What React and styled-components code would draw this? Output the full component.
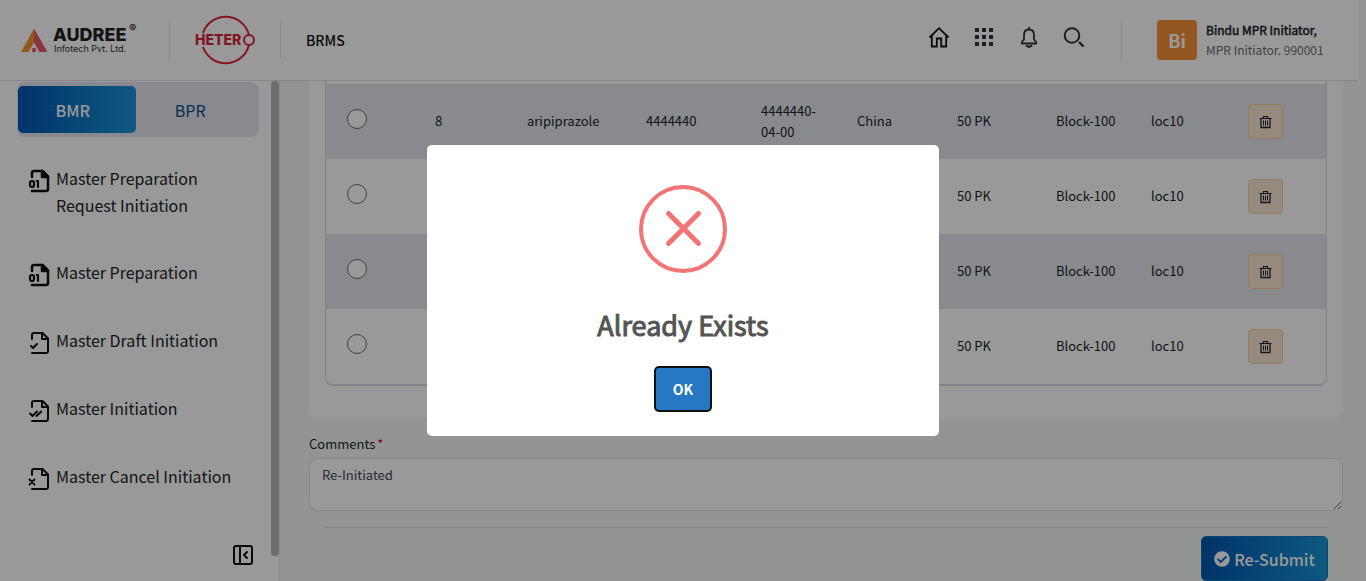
import React from "react";
import styled, { createGlobalStyle } from "styled-components";
import { PanelLeftClose } from "lucide-react";
import { FaCheckCircle } from "react-icons/fa";

const GlobalStyle = createGlobalStyle`
  * { box-sizing: border-box; }
  body {
    margin: 0;
    background: #f5f9f7;
    color: #212529;
    font-family: "Noto Sans CJK SC", "Noto Sans", sans-serif;
    font-size: 13px;
  }
  button, textarea { font-family: inherit; }
`;

const Page = styled.div`
  display: flex;
  flex-direction: column;
  min-height: 100vh;
`;

const Header = styled.header`
  display: flex;
  align-items: center;
  height: 81px;
  margin-right: 8px;
  padding: 0 37px 0 20px;
  background: #fff;
  border-bottom: 1px solid #dfe0ea;
`;

const Divider = styled.span`
  width: 1px;
  height: 35px;
  background: #dcdfe3;
  margin: 0 ${(p) => p.$right}px 0 ${(p) => p.$left}px;
`;

const AppName = styled.span`
  font-size: 14px;
  font-weight: 500;
  color: #111;
`;

const Tools = styled.nav`
  display: flex;
  gap: 21px;
  margin-left: auto;
  padding-bottom: 6px;
`;

const ToolButton = styled.button`
  width: 24px;
  height: 24px;
  padding: 0;
  border: 0;
  background: none;
  color: #2c3440;
  svg { display: block; }
`;

const Avatar = styled.div`
  width: 40px;
  height: 40px;
  border-radius: 4px;
  background: #f59138;
  color: #fff;
  font-size: 18px;
  font-weight: 700;
  line-height: 41px;
  text-align: center;
`;

const UserInfo = styled.div`
  width: 115px;
  margin-left: 9px;
  font-size: 12px;
  line-height: 20px;
  white-space: nowrap;
`;

const UserName = styled.div`
  color: #212529;
  -webkit-text-stroke: 0.5px #212529;
`;

const UserRole = styled.div`
  color: #6c6c6c;
`;

const Body = styled.div`
  display: flex;
  flex: 1;
`;

const Sidebar = styled.aside`
  display: flex;
  flex: 0 0 280px;
  background: #fff;
  border-right: 1px solid #e4e8ea;
`;

const SidebarContent = styled.div`
  display: flex;
  flex-direction: column;
  flex: 1;
  padding: 1px 12px 14px 17px;
`;

const ScrollThumb = styled.div`
  width: 8px;
  height: 95%;
  border-radius: 4px;
  background: #b4b7b6;
`;

const Tabs = styled.div`
  display: flex;
  padding: 4px 6px 4px 1px;
  border-radius: 8px;
  background: #e4e6ee;
`;

const Tab = styled.button`
  flex: 1;
  height: 47px;
  padding: 0 8px 0 0;
  border: 0;
  border-radius: 5px;
  font-size: 16px;
  font-weight: ${(p) => (p.$active ? 500 : 400)};
  color: ${(p) => (p.$active ? "#fff" : "#0a4d8c")};
  background: ${(p) => (p.$active ? "linear-gradient(90deg, #0057b0, #1994d8)" : "none")};
`;

const Menu = styled.nav`
  display: flex;
  flex-direction: column;
  gap: 40px;
  margin: 28px 0 0 11px;
`;

const MenuLink = styled.a`
  display: flex;
  gap: 4px;
  font-size: 16px;
  line-height: 27px;
  color: #212529;
  text-decoration: none;
  svg { flex: none; margin-top: 4px; color: #111; }
`;

const CollapseButton = styled.button`
  align-self: flex-end;
  width: 24px;
  height: 24px;
  margin-top: auto;
  margin-right: 4px;
  padding: 0;
  border: 0;
  background: none;
  color: #111;
  svg { display: block; }
`;

const Main = styled.main`
  flex: 1;
  min-width: 0;
  padding: 0 23px 0 29px;
`;

const Card = styled.section`
  padding: 0 16px 32px;
  border-radius: 0 0 8px 8px;
  background: #fff;
`;

const TableFrame = styled.div`
  padding-top: 3px;
  border: 1px solid #d9dbe6;
  border-top: 0;
  border-bottom-width: 2px;
  border-radius: 0 0 8px 8px;
  overflow: hidden;
`;

const Table = styled.table`
  width: 100%;
  table-layout: fixed;
  border-collapse: collapse;
`;

const Row = styled.tr`
  height: 75px;
  background: ${(p) => (p.$shaded ? "#e4e6ed" : "#fff")};
`;

const Cell = styled.td`
  padding: 0 8px 2px 20px;
  line-height: 21px;
  vertical-align: middle;
`;

const ActionCell = styled(Cell)`
  padding-bottom: 0;
`;

const Radio = styled.input`
  appearance: none;
  display: block;
  width: 20px;
  height: 20px;
  margin: 0 0 4px 1px;
  border: 1px solid #6b6b6b;
  border-radius: 50%;
  background: #fff;
`;

const DeleteButton = styled.button`
  display: grid;
  place-items: center;
  width: 35px;
  height: 35px;
  padding: 0;
  border: 1px solid #fbcf9f;
  border-radius: 4px;
  background: #fbe4d0;
  color: #212529;
`;

const Field = styled.div`
  margin-top: 16px;
`;

const Label = styled.label`
  display: block;
  line-height: 20px;
`;

const Required = styled.span`
  margin-left: 2px;
  color: #e3001b;
`;

const Comments = styled.textarea`
  display: block;
  width: 100%;
  height: 53px;
  margin-top: 4px;
  padding: 6px 12px;
  border: 1px solid #dfe1ec;
  border-radius: 8px;
  background: #fff;
  color: #454b54;
  font-size: 13px;
  line-height: 20px;
`;

const Actions = styled.div`
  display: flex;
  justify-content: flex-end;
  margin: 16px 15px 0;
  padding-top: 8px;
  border-top: 1px solid #d9dbe0;
`;

const SubmitButton = styled.button`
  display: flex;
  align-items: center;
  justify-content: center;
  gap: 4px;
  width: 127px;
  height: 45px;
  padding: 0;
  border: 1px solid #1676bd;
  border-radius: 5px;
  background: linear-gradient(90deg, #0057b0, #1994d8);
  color: #fff;
  font-size: 16px;
  font-weight: 500;
`;

const Overlay = styled.div`
  position: fixed;
  inset: 0;
  display: flex;
  align-items: center;
  justify-content: center;
  background: rgba(0, 0, 0, 0.4);
`;

const Dialog = styled.div`
  display: flex;
  flex-direction: column;
  align-items: center;
  width: 512px;
  max-width: 100%;
  padding: 40px 20px 24px;
  border-radius: 5px;
  background: #fff;
`;

const DialogTitle = styled.h2`
  margin: 31px 0 21px;
  font-size: 27px;
  font-weight: 400;
  line-height: 41px;
  color: #545454;
  -webkit-text-stroke: 1px #545454;
`;

const OkButton = styled.button`
  width: 58px;
  height: 46px;
  padding: 0;
  border: 2px solid #101010;
  border-radius: 5px;
  background: #2778c4;
  color: #fff;
  font-size: 14px;
  font-weight: 700;
`;

function AudreeLogo() {
  return (
    <svg width="120" height="40" viewBox="0 0 120 40" role="img" aria-label="Audree Infotech">
      <path d="M14 8.500 1 32h7.500L14 22.500z" fill="#f4932f" />
      <path d="M14 8.500v14l5.500 9.500H27.500z" fill="#e4576b" />
      <circle cx="14" cy="30" r="2.200" fill="#e4576b" />
      <text x="33" y="21" fontFamily="Inter, sans-serif" fontSize="18" fontWeight="800" fill="#222">AUDREE</text>
      <text x="34" y="32" fontFamily="Inter, sans-serif" fontSize="9" fill="#333">Infotech Pvt. Ltd.</text>
      <text x="109" y="12" fontFamily="Inter, sans-serif" fontSize="11" fontWeight="600" fill="#222">®</text>
    </svg>
  );
}

function HeteroLogo() {
  return (
    <svg width="60" height="50" viewBox="0 0 60 50" role="img" aria-label="Hetero">
      <g fill="none" stroke="#d7263a" strokeWidth="2">
        <path d="M8 18a24 24 0 0 1 46 2M8 32a24 24 0 0 0 46-2" />
        <circle cx="54" cy="25" r="5" />
      </g>
      <text x="0" y="30" fontFamily="Inter, sans-serif" fontSize="14" fontWeight="800" fill="#d7263a">HETER</text>
    </svg>
  );
}

function HomeIcon() {
  return (
    <svg width="24" height="24" viewBox="0 0 24 24" fill="none" stroke="#111" strokeWidth="1.800">
      <path d="M2.500 12.500 12 3.200l9.500 9.300M4.800 11v10.500h5v-8h4.400v8h5V11" />
    </svg>
  );
}

function GridIcon() {
  return (
    <svg width="24" height="24" viewBox="0 0 24 24" fill="currentColor">
      {[3, 10, 17].map((y) => [3, 10, 17].map((x) => <rect key={`${x}-${y}`} x={x} y={y} width="4" height="4" />))}
    </svg>
  );
}

function BellIcon() {
  return (
    <svg width="24" height="24" viewBox="0 0 24 24" fill="none" stroke="currentColor" strokeWidth="1.800" strokeLinejoin="round">
      <path d="M12 2v2.500M4.800 18.500h14.400v-1.500L17 14.500V10c0-3.500-2-5.500-5-5.500S7 6.500 7 10v4.500L4.800 17z" />
      <path d="M9 20.300q3 3 6 0" strokeWidth="2.200" />
    </svg>
  );
}

function SearchIcon() {
  return (
    <svg width="24" height="24" viewBox="0 0 24 24" fill="none" stroke="currentColor" strokeWidth="2">
      <circle cx="10" cy="10.500" r="7.300" />
      <path d="m17 17 4.500 4.500" strokeWidth="2.400" />
    </svg>
  );
}

function TrashIcon() {
  return (
    <svg width="13" height="14" viewBox="0 0 13 14" fill="none" stroke="currentColor">
      <path d="M0.500 3.500h12M4.500 3.500V1.500h4v2" strokeWidth="1.200" />
      <path d="M2 3.500v9h9v-9" strokeWidth="1.300" />
      <path d="M4.500 5.500v5M6.500 5.500v5M8.500 5.500v5" />
    </svg>
  );
}

const fileMarks = {
  check: <path d="m3 15 2 2 4-4" />,
  double: <path d="m2 14.500 2.500 2.500 4.500-4.500M8.500 17l4.700-4.500" />,
  cross: <path d="m1.500 12.500 5 5m0-5-5 5" />,
};

function FileIcon({ mark }) {
  if (mark === "digits") {
    return (
      <svg width="24" height="24" viewBox="0 0 24 24" fill="none" stroke="currentColor" strokeWidth="2.500" strokeLinecap="round" strokeLinejoin="round">
        <path d="M4 22h14a2 2 0 0 0 2-2V7.500L14.500 2H6a2 2 0 0 0-2 2v4" />
        <path d="M14 2v6h6z" fill="currentColor" />
        <rect x="2" y="12" width="4" height="6" rx="2" strokeWidth="2.200" />
        <path d="M8.800 12H10v6" strokeWidth="2.200" />
      </svg>
    );
  }
  return (
    <svg width="24" height="24" viewBox="0 0 24 24" fill="none" stroke="currentColor" strokeWidth="2" strokeLinecap="round" strokeLinejoin="round">
      <path d="M4 22h14a2 2 0 0 0 2-2V7.500L14.500 2H6a2 2 0 0 0-2 2v4" />
      <path d="M14 2v6h6" />
      {fileMarks[mark]}
    </svg>
  );
}

function ErrorIcon() {
  return (
    <svg width="88" height="88" viewBox="0 0 88 88" fill="none" stroke="#f27474" aria-hidden="true">
      <circle cx="44" cy="44" r="42" strokeWidth="4" />
      <path d="m29.500 28.500 30 30m0-30-30 30" strokeWidth="5" strokeLinecap="round" />
    </svg>
  );
}

const menuItems = [
  { label: "Master Preparation Request Initiation", mark: "digits" },
  { label: "Master Preparation", mark: "digits" },
  { label: "Master Draft Initiation", mark: "check" },
  { label: "Master Initiation", mark: "double" },
  { label: "Master Cancel Initiation", mark: "cross" },
];

const columns = ["8.9%", "9.2%", "11.9%", "11.5%", "9.6%", "10%", "9.9%", "9.5%", "9.7%", "9.8%"];

const rows = [
  ["8", "aripiprazole", "4444440", "4444440-04-00", "China", "50 PK", "Block-100", "loc10"],
  ["", "", "", "", "", "50 PK", "Block-100", "loc10"],
  ["", "", "", "", "", "50 PK", "Block-100", "loc10"],
  ["", "", "", "", "", "50 PK", "Block-100", "loc10"],
];

export default function App() {
  return (
    <>
      <GlobalStyle />
      <Page>
        <Header>
          <AudreeLogo />
          <Divider $left={29} $right={25} />
          <HeteroLogo />
          <Divider $left={25} $right={25} />
          <AppName>BRMS</AppName>
          <Tools>
            <ToolButton aria-label="Home"><HomeIcon /></ToolButton>
            <ToolButton aria-label="Apps"><GridIcon /></ToolButton>
            <ToolButton aria-label="Notifications"><BellIcon /></ToolButton>
            <ToolButton aria-label="Search"><SearchIcon /></ToolButton>
          </Tools>
          <Divider $left={35} $right={35} />
          <Avatar>Bi</Avatar>
          <UserInfo>
            <UserName>Bindu MPR Initiator,</UserName>
            <UserRole>MPR Initiator. 990001</UserRole>
          </UserInfo>
        </Header>
        <Body>
          <Sidebar>
            <SidebarContent>
              <Tabs>
                <Tab $active>BMR</Tab>
                <Tab>BPR</Tab>
              </Tabs>
              <Menu>
                {menuItems.map((item) => (
                  <MenuLink key={item.label} href="#">
                    <FileIcon mark={item.mark} />
                    <span>{item.label}</span>
                  </MenuLink>
                ))}
              </Menu>
              <CollapseButton aria-label="Collapse sidebar"><PanelLeftClose size={24} /></CollapseButton>
            </SidebarContent>
            <ScrollThumb />
          </Sidebar>
          <Main>
            <Card>
              <TableFrame>
                <Table>
                  <colgroup>
                    {columns.map((width, i) => <col key={i} width={width} />)}
                  </colgroup>
                  <tbody>
                    {rows.map((cells, i) => (
                      <Row key={i} $shaded={i % 2 === 0}>
                        <Cell><Radio type="radio" name="request" aria-label={`Select row ${i + 8}`} /></Cell>
                        {cells.map((text, j) => <Cell key={j}>{text}</Cell>)}
                        <ActionCell><DeleteButton aria-label="Delete"><TrashIcon /></DeleteButton></ActionCell>
                      </Row>
                    ))}
                  </tbody>
                </Table>
              </TableFrame>
            </Card>
            <Field>
              <Label htmlFor="comments">Comments<Required>*</Required></Label>
              <Comments id="comments" defaultValue="Re-Initiated" />
            </Field>
            <Actions>
              <SubmitButton type="button"><FaCheckCircle size={16} />Re-Submit</SubmitButton>
            </Actions>
          </Main>
        </Body>
      </Page>
      <Overlay>
        <Dialog role="dialog" aria-modal="true" aria-labelledby="dialog-title">
          <ErrorIcon />
          <DialogTitle id="dialog-title">Already Exists</DialogTitle>
          <OkButton type="button">OK</OkButton>
        </Dialog>
      </Overlay>
    </>
  );
}
